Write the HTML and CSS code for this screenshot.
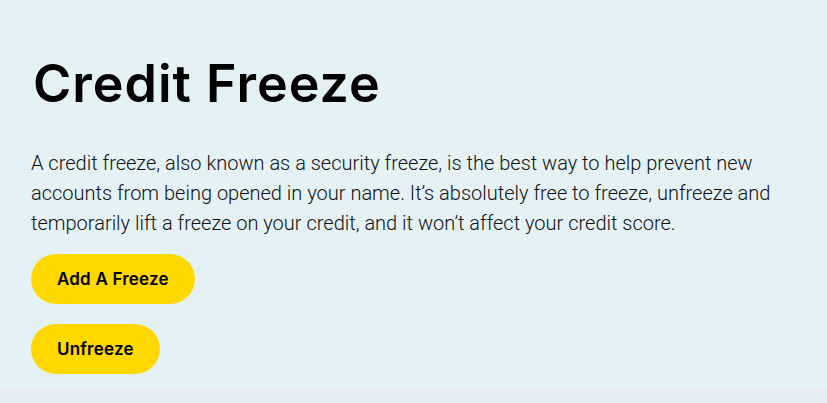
FILE: index.html
```html
<!DOCTYPE html>
<html lang="en">
<head>
<meta charset="utf-8">
<title>Credit Freeze</title>
<link rel="stylesheet" href="styles.css">
</head>
<body>
<section class="hero">
  <h1 class="title">Credit Freeze</h1>
  <p class="lead">A credit freeze, also known as a security freeze, is the best way to help prevent new accounts from being opened in your name. It’s absolutely free to freeze, unfreeze and temporarily lift a freeze on your credit, and it won’t affect your credit score.</p>
  <div class="actions">
    <a class="btn" href="#">Add A Freeze</a>
    <a class="btn" href="#">Unfreeze</a>
  </div>
</section>
<div class="footer-strip"></div>
</body>
</html>
```
FILE: styles.css
```css
html, body {
  margin: 0;
  padding: 0;
}
body {
  background: #e4ebf1;
  font-family: Roboto, "Liberation Sans", sans-serif;
}
.hero {
  background: #e4f2f6;
  height: 388px;
  box-sizing: border-box;
  padding: 52px 31px 0 31px;
}
.title {
  margin: 0 0 0 2px;
  font-family: Inter, "Liberation Sans", sans-serif;
  font-weight: 560;
  font-size: 52px;
  letter-spacing: 1px;
  line-height: 64px;
  color: #000;
}
.lead {
  margin: 32px 0 0 0;
  max-width: 770px;
  font-family: Roboto, sans-serif;
  font-weight: 300;
  font-size: 20px;
  line-height: 30px;
  color: #111;
}
.actions {
  margin-top: 16px;
  display: flex;
  flex-direction: column;
  align-items: flex-start;
  gap: 20px;
}
.btn {
  display: inline-flex;
  align-items: center;
  height: 50px;
  padding: 0 26px;
  border-radius: 25px;
  background: #ffd800;
  color: #000;
  text-decoration: none;
  font-family: Inter, sans-serif;
  font-weight: 600;
  font-size: 17px;
  letter-spacing: 0.2px;
}
```
